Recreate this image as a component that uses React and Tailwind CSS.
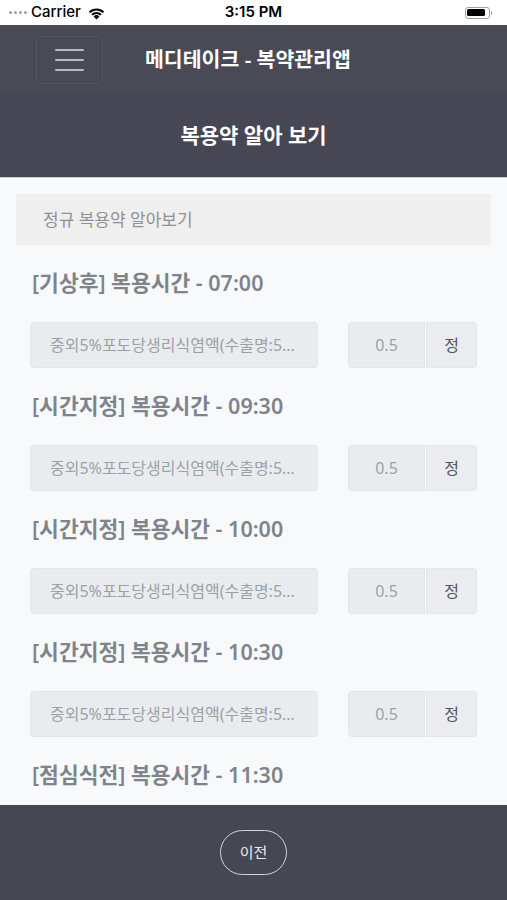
import React from 'react';

const font = "font-['Noto_Sans','Noto_Sans_CJK_KR',sans-serif]";

const schedule = [
  { label: '[기상후] 복용시간 - 07:00', drug: '중외5%포도당생리식염액(수출명:5...', qty: '0.5', unit: '정' },
  { label: '[시간지정] 복용시간 - 09:30', drug: '중외5%포도당생리식염액(수출명:5...', qty: '0.5', unit: '정' },
  { label: '[시간지정] 복용시간 - 10:00', drug: '중외5%포도당생리식염액(수출명:5...', qty: '0.5', unit: '정' },
  { label: '[시간지정] 복용시간 - 10:30', drug: '중외5%포도당생리식염액(수출명:5...', qty: '0.5', unit: '정' },
  { label: '[점심식전] 복용시간 - 11:30' },
];

function StatusBar() {
  return (
    <div className="h-[25px] bg-white flex items-center justify-between px-[9px] font-['Inter',sans-serif] text-black relative">
      <div className="flex items-center gap-[4px]">
        <div className="flex gap-[2px] items-center">
          <span className="w-[3px] h-[3px] rounded-full bg-gray-400" />
          <span className="w-[3px] h-[3px] rounded-full bg-gray-400" />
          <span className="w-[3px] h-[3px] rounded-full bg-gray-400" />
          <span className="w-[3px] h-[3px] rounded-full bg-gray-400" />
        </div>
        <span className="text-[15px] font-medium">Carrier</span>
        <svg width="19" height="14" viewBox="0 0 19 14" className="ml-[2px]">
          <path d="M9.5 13.5 L6.6 10.4 A4.2 4.2 0 0 1 12.4 10.4 Z" fill="#000" />
          <path d="M4.3 8.1 A7.4 7.4 0 0 1 14.7 8.1 L13.2 9.6 A5.3 5.3 0 0 0 5.8 9.6 Z" fill="#000" />
          <path d="M1.8 5.6 A10.9 10.9 0 0 1 17.2 5.6 L15.7 7.1 A8.8 8.8 0 0 0 3.3 7.1 Z" fill="#000" />
        </svg>
      </div>
      <span className="absolute left-1/2 -translate-x-1/2 text-[15px] font-semibold">3:15 PM</span>
      <div className="flex items-center mr-[6px]">
        <div className="w-[25px] h-[12px] rounded-[3px] border border-gray-400 p-[1.5px]">
          <div className="w-[18px] h-full rounded-[1.5px] bg-black" />
        </div>
        <div className="w-[1.5px] h-[4px] bg-gray-400 rounded-r-sm ml-[1px]" />
      </div>
    </div>
  );
}

function Section({ item }) {
  return (
    <div>
      <div className="mt-[24px] h-[28px] flex items-center pl-[2px] text-[21.5px] font-semibold text-[#7f848b] whitespace-nowrap">
        {item.label}
      </div>
      {item.drug && (
        <div className="mt-[25px] h-[46px] flex">
          <div className="w-[288px] h-full rounded-[4px] bg-[#e9ecef] border border-[#e3e6e9] flex items-center pl-[19px] text-[16px] text-[#9da1a7] whitespace-nowrap overflow-hidden">
            {item.drug}
          </div>
          <div className="ml-[30px] w-[77px] h-full rounded-l-[4px] bg-[#e9ecef] border border-[#e3e6e9] flex items-center justify-center text-[16px] text-[#9da1a7]">
            {item.qty}
          </div>
          <div className="ml-[1px] w-[51px] h-full rounded-r-[4px] bg-[#eaecef] border border-[#e3e6e9] flex items-center justify-center text-[16px] text-[#50555c]">
            {item.unit}
          </div>
        </div>
      )}
    </div>
  );
}

export default function App() {
  return (
    <div className={`w-[507px] h-[900px] flex flex-col overflow-hidden bg-[#f8f9fb] ${font}`}>
      <StatusBar />

      <div className="h-[69px] bg-[#484b56] flex items-center">
        <button className="ml-[36px] w-[67px] h-[48px] rounded-[5px] border border-[#53565f] flex flex-col items-center justify-center gap-[8px]">
          <span className="w-[29px] h-[2px] bg-[#b9bbc0] rounded" />
          <span className="w-[29px] h-[2px] bg-[#b9bbc0] rounded" />
          <span className="w-[29px] h-[2px] bg-[#b9bbc0] rounded" />
        </button>
        <h1 className="ml-[42px] text-[20.5px] font-semibold text-white whitespace-nowrap">메디테이크 - 복약관리앱</h1>
      </div>

      <div className="h-[84px] bg-[#474654] flex items-center justify-center border-b border-[#c9cbd1]">
        <h2 className="text-[21px] font-bold text-white">복용약 알아 보기</h2>
      </div>

      <div className="flex-1 overflow-hidden pt-[16px]">
        <div className="mx-[16px] h-[51px] bg-[#efefef] flex items-center pl-[27px] text-[17px] text-[#8d9196]">
          정규 복용약 알아보기
        </div>
        <div className="px-[30px]">
          {schedule.map((item, i) => (
            <Section key={i} item={item} />
          ))}
        </div>
      </div>

      <div className="h-[95px] bg-[#474653] flex items-center justify-center">
        <button className="w-[67px] h-[45px] rounded-full border-[1.5px] border-[#d4d4d9] text-[15px] text-[#ececef]">
          이전
        </button>
      </div>
    </div>
  );
}
